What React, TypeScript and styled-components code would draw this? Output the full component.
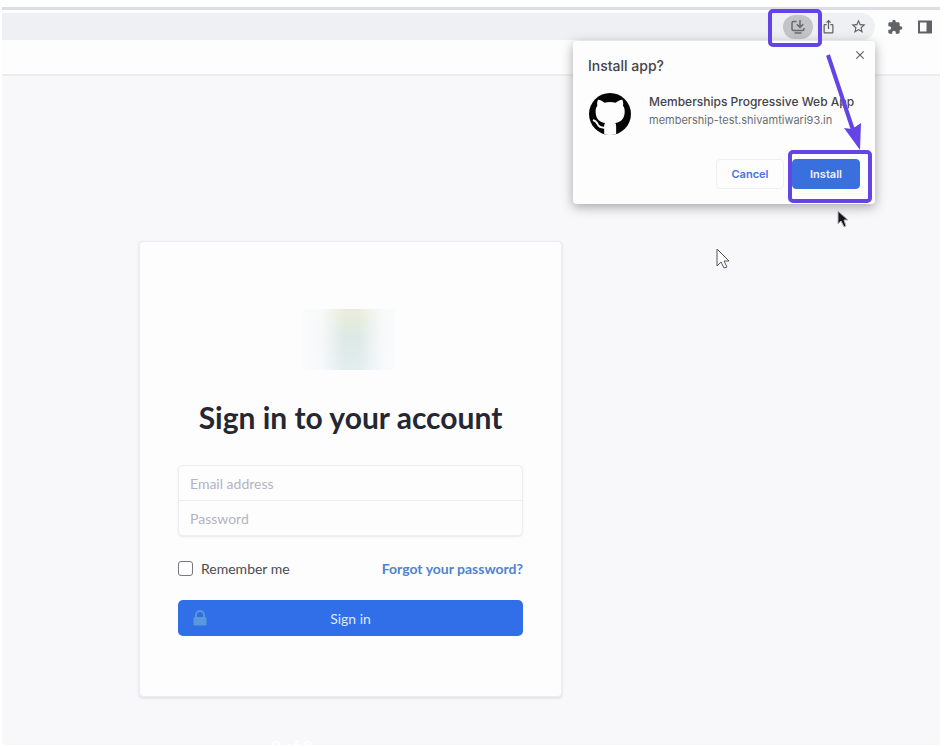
import React from "react";
import styled, { createGlobalStyle } from "styled-components";
import { MdExtension, MdStarBorder, MdClose, MdIosShare } from "react-icons/md";

const GlobalStyle = createGlobalStyle`
  *, *::before, *::after { box-sizing: border-box; }
  html, body, #root { height: 100%; }
  body { margin: 0; background: #ffffff; }
  button, input { font: inherit; }
`;

const Frame = styled.div`
  min-height: 100%;
  padding: 7px 7px 2px 2px;
  display: flex;
`;

const Browser = styled.div`
  position: relative;
  flex: 1;
  display: flex;
  flex-direction: column;
  overflow: hidden;
  background: #f8f8fb;
  font-family: Lato, "Open Sans", sans-serif;
`;

const Toolbar = styled.header`
  display: flex;
  align-items: center;
  padding: 3px 0;
  border-top: 3px solid #dddde5;
  background: #fdfdfe;
`;

const AddressBar = styled.div`
  flex: 1;
  height: 27px;
  margin-right: 5px;
  padding-right: 2px;
  display: flex;
  align-items: center;
  justify-content: flex-end;
  border-radius: 0 14px 14px 0;
  background: #eff0f4;
`;

const IconButton = styled.button<{ $active?: boolean }>`
  position: relative;
  display: grid;
  place-items: center;
  width: 30px;
  height: 24px;
  padding: 0;
  border: 0;
  border-radius: 12px;
  background: ${(p) => (p.$active ? "#c3c4c8" : "transparent")};
  color: ${(p) => (p.$active ? "#66686c" : "#606267")};
`;

const Highlight = styled.span`
  position: absolute;
  z-index: 1;
  inset: -6px -9px -8px -15px;
  border: 4px solid #6444e6;
  border-radius: 5px;
  pointer-events: none;
`;

const InstallHighlight = styled(Highlight)`
  inset: -10px -13px -15px -5px;
`;

const PageHeader = styled.div`
  height: 33px;
  border-bottom: 2px solid #ececf0;
  background: #fdfdfe;
`;

const Dialog = styled.section`
  position: absolute;
  top: 34px;
  right: 65px;
  width: 302px;
  padding: 16px 15px 15px;
  border-radius: 4px;
  background: #fdfdfe;
  box-shadow: 0 3px 12px rgba(0, 0, 0, 0.34);
  font-family: Inter, sans-serif;
`;

const DialogTitle = styled.h2`
  margin: 0;
  font-size: 14px;
  line-height: 18px;
  font-weight: 500;
  color: #434448;
`;

const CloseButton = styled(IconButton)`
  position: absolute;
  top: 2px;
  right: 0;
`;

const AppRow = styled.div`
  display: flex;
  align-items: flex-start;
  gap: 18px;
  padding: 18px 0 24px 1px;
`;

const AppName = styled.div`
  font-size: 12px;
  line-height: 18px;
  font-weight: 500;
  color: #434448;
  white-space: nowrap;
`;

const AppHost = styled(AppName)`
  font-size: 11px;
  font-weight: 400;
  color: #6c6d71;
`;

const DialogActions = styled.div`
  display: flex;
  justify-content: flex-end;
  gap: 8px;
`;

const DialogButton = styled.button<{ $primary?: boolean }>`
  position: relative;
  width: 68px;
  height: 30px;
  padding: 0;
  border: 1px solid ${(p) => (p.$primary ? "#3a70dd" : "#f0f0f3")};
  border-radius: 4px;
  background: ${(p) => (p.$primary ? "#3a70dd" : "#fdfdfe")};
  color: ${(p) => (p.$primary ? "#eef3ff" : "#4672dc")};
  font-size: 11px;
  font-weight: 600;
`;

const Drawing = styled.svg`
  position: absolute;
  pointer-events: none;
`;

const Arrow = styled(Drawing)`
  top: 46px;
  right: 74px;
`;

const DarkPointer = styled(Drawing)`
  top: 203px;
  right: 91px;
`;

const LightPointer = styled(Drawing)`
  top: 240px;
  right: 209px;
`;

const Content = styled.main`
  flex: 1;
  display: flex;
  flex-direction: column;
  align-items: flex-start;
  padding: 165px 0 0 137px;
`;

const Card = styled.form`
  width: 423px;
  max-width: 100%;
  display: flex;
  flex-direction: column;
  padding: 67px 38px 60px;
  border: 1px solid #ececf1;
  border-radius: 4px;
  background: #fdfdfe;
  box-shadow: 0 1px 3px rgba(60, 60, 90, 0.16);
`;

const Logo = styled.div`
  align-self: center;
  width: 92px;
  height: 61px;
  margin-right: 4px;
  background:
    linear-gradient(90deg, #fafbfc 0%, #fafbfcdd 20%, #fafbfc00 45%, #fafbfc00 60%, #fafbfcdd 85%, #fafbfc 100%),
    linear-gradient(180deg, #ebeddc 0%, #dce9e3 46%, #e2edf0 100%);
`;

const Title = styled.h1`
  margin: 28px 0;
  text-align: center;
  font-size: 30px;
  line-height: 39px;
  font-weight: 700;
  color: #252733;
  white-space: nowrap;
`;

const Fields = styled.div`
  display: flex;
  flex-direction: column;
  border: 1px solid #ececf1;
  border-radius: 5px;
  box-shadow: 0 1px 2px rgba(60, 60, 90, 0.1);
`;

const Field = styled.input`
  height: 34px;
  width: 100%;
  padding: 0 11px;
  border: 0;
  border-radius: 5px;
  background: transparent;
  font-size: 14px;
  color: #252733;
  & + & { height: 35px; border-top: 1px solid #ececf1; border-radius: 0; }
  &::placeholder { color: #b3b4be; opacity: 1; }
`;

const Options = styled.div`
  display: flex;
  justify-content: space-between;
  align-items: center;
  height: 64px;
  font-size: 14px;
`;

const Remember = styled.label`
  display: flex;
  align-items: center;
  gap: 8px;
  color: #4a4b51;
`;

const Checkbox = styled.input`
  appearance: none;
  width: 15px;
  height: 15px;
  margin: 0;
  border: 1px solid #77787e;
  border-radius: 3px;
  background: #ffffff;
  &:checked { background: #316fe8; }
`;

const Forgot = styled.a`
  color: #4f83cd;
  font-weight: 700;
  text-decoration: none;
`;

const SignIn = styled.button`
  display: grid;
  grid-template-columns: 1fr auto 1fr;
  align-items: center;
  height: 36px;
  padding: 0 15px;
  border: 0;
  border-radius: 5px;
  background: #316fe8;
  color: #dfe9ff;
  font-size: 14px;
`;

const PageCount = styled.footer`
  margin: 38px 0 -12px 132px;
  color: #ffffff;
  font-size: 16px;
  line-height: 22px;
`;

export default function App() {
  return (
    <>
      <GlobalStyle />
      <Frame>
        <Browser>
          <Toolbar>
            <AddressBar>
              <IconButton type="button" aria-label="Install app" $active>
                <svg width="16" height="16" viewBox="0 0 16 16" fill="none" stroke="currentColor" strokeWidth="1.5">
                  <path d="M6.5 2.5H3.5Q2 2.5 2 4V10Q2 11.500 3.500 11.500H12.500Q14 11.500 14 10V9" />
                  <path d="M4.500 14H11.500M10 1V8M6.800 5.200L10 8.400L13.200 5.200" />
                </svg>
                <Highlight />
              </IconButton>
              <IconButton type="button" aria-label="Share"><MdIosShare size={15} /></IconButton>
              <IconButton type="button" aria-label="Bookmark"><MdStarBorder size={17} /></IconButton>
            </AddressBar>
            <IconButton type="button" aria-label="Extensions"><MdExtension size={16} /></IconButton>
            <IconButton type="button" aria-label="Side panel">
              <svg width="14" height="14" viewBox="0 0 14 14" fill="currentColor">
                <path fillRule="evenodd" d="M0 0.500H14V13.500H0zM2 2.500V11.500H8.500V2.500z" />
              </svg>
            </IconButton>
          </Toolbar>
          <PageHeader />
          <Content>
            <Card onSubmit={(e) => e.preventDefault()}>
              <Logo />
              <Title>Sign in to your account</Title>
              <Fields>
                <Field type="email" aria-label="Email address" placeholder="Email address" />
                <Field type="password" aria-label="Password" placeholder="Password" />
              </Fields>
              <Options>
                <Remember><Checkbox type="checkbox" />Remember me</Remember>
                <Forgot href="#forgot">Forgot your password?</Forgot>
              </Options>
              <SignIn type="submit">
                <svg width="14" height="16" viewBox="0 0 14 16">
                  <rect x="0.500" y="7" width="13" height="8.500" rx="1.500" fill="#5b97dc" />
                  <path d="M3 8V5a4 4 0 0 1 8 0v3" fill="none" stroke="#5b97dc" strokeWidth="1.8" />
                </svg>
                <span>Sign in</span>
              </SignIn>
            </Card>
            <PageCount>0 of 0</PageCount>
          </Content>
          <Dialog role="dialog" aria-label="Install app?">
            <DialogTitle>Install app?</DialogTitle>
            <CloseButton type="button" aria-label="Close"><MdClose size={14} /></CloseButton>
            <AppRow>
              <svg width="42" height="42" viewBox="27 24 130 130" aria-hidden="true">
                <clipPath id="disc"><circle cx="92" cy="89" r="65" /></clipPath>
                <g clipPath="url(#disc)">
                  <rect x="27" y="24" width="130" height="130" fill="#050505" />
                  <path
                    d="M55 45C63 45 70 50 75 54Q92 50 109 54C115 50 123 45 130 45C134 53 133 59 132 63C138 71 138 79 137 88C135 106 124 114 108 117C111 120 111 124 111 128V156H74V128C74 124 74 120 77 117C61 114 50 106 48 88C47 79 47 71 53 63C52 59 51 53 55 45Z"
                    fill="#fdfdfe"
                  />
                  <path d="M39 108Q49 110 54 121Q60 133 78 131" fill="none" stroke="#fdfdfe" strokeWidth="6" />
                </g>
              </svg>
              <div>
                <AppName>Memberships Progressive Web App</AppName>
                <AppHost>membership-test.shivamtiwari93.in</AppHost>
              </div>
            </AppRow>
            <DialogActions>
              <DialogButton type="button">Cancel</DialogButton>
              <DialogButton type="button" $primary>Install<InstallHighlight /></DialogButton>
            </DialogActions>
          </Dialog>
          <Arrow width="40" height="100" viewBox="0 0 40 100">
            <path d="M2 2L28 80" stroke="#6444e6" strokeWidth="4" />
            <path d="M18 75L26 76L35 70L34 97Z" fill="#6444e6" />
          </Arrow>
          <DarkPointer width="12" height="18" viewBox="0 0 12 18">
            <path d="M1 1V14L4 11L7 17L9 16L7 10H11Z" fill="#17171b" stroke="#b5b5bd" />
          </DarkPointer>
          <LightPointer width="15" height="22" viewBox="0 0 15 22">
            <path d="M1 2V19L5 15L8 21L11 20L8 14H13Z" fill="#ffffff" stroke="#55555d" />
          </LightPointer>
        </Browser>
      </Frame>
    </>
  );
}
